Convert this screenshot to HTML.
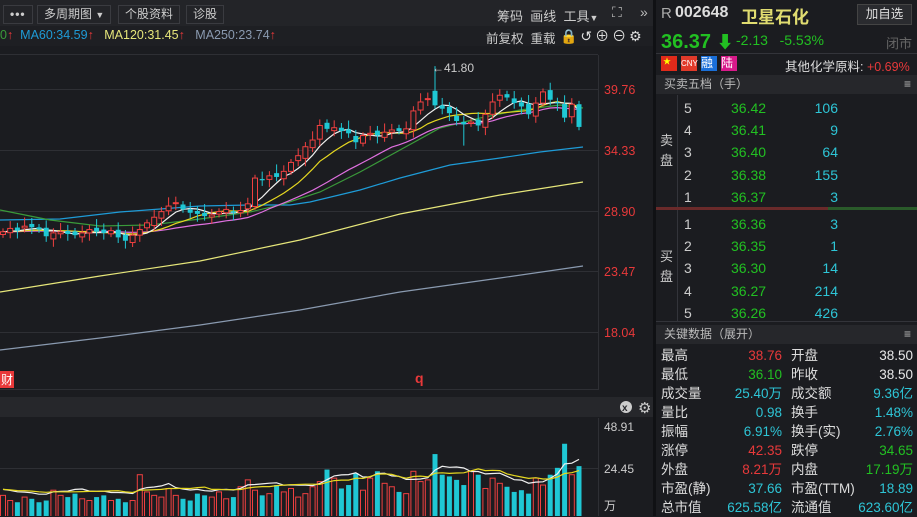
<!DOCTYPE html>
<html><head><meta charset="utf-8"><style>
*{margin:0;padding:0;box-sizing:border-box}
body{width:917px;height:516px;overflow:hidden;background:#1b1c20;font-family:"Liberation Sans","Noto Sans CJK SC",sans-serif;color:#ccc;position:relative}
.a{position:absolute;white-space:nowrap}
.btn{position:absolute;top:5px;height:19px;border:1px solid #3a3b40;background:#232428;color:#ccc;font-size:12px;line-height:17px;padding:0 6px}
.g{color:#22c022}.r{color:#e8393a}.c{color:#2ec5d6}.w{color:#e8e8e8}
.rt{text-align:right}
.hd{position:absolute;left:656px;width:261px;height:19px;background:#26272b;font-size:12px;line-height:19px;padding-left:8px;color:#bbb}
.kd{position:absolute;font-size:13.5px;line-height:19px}
</style></head><body>
<!-- top toolbar -->
<div class="a" style="left:0;top:0;width:655px;height:26px;background:#232428"></div>
<div class="btn" style="left:3px;width:30px;font-weight:bold;letter-spacing:1px">•••</div>
<div class="btn" style="left:37px">多周期图 <span style="font-size:9px">▼</span></div>
<div class="btn" style="left:118px">个股资料</div>
<div class="btn" style="left:186px">诊股</div>
<div class="a" style="left:497px;top:6px;font-size:13px;color:#ccc">筹码 &nbsp;画线 &nbsp;工具<span style="font-size:9px">▼</span></div>
<div class="a" style="left:612px;top:4px;font-size:14px;color:#bbb">⛶</div>
<div class="a" style="left:640px;top:4px;font-size:14px;color:#bbb">»</div>
<!-- MA row -->
<div class="a" style="left:0;top:26px;width:655px;height:20px;background:#1e1f23"></div>
<div class="a" style="left:0;top:28px;font-size:12.5px"><span style="color:#3a9a3a">0</span><span class="r">↑</span> &nbsp;<span style="color:#1e9bd7">MA60:34.59</span><span class="r">↑</span> &nbsp;&nbsp;<span style="color:#e6e67a">MA120:31.45</span><span class="r">↑</span> &nbsp;&nbsp;<span style="color:#8a9ab0">MA250:23.74</span><span class="r">↑</span></div>
<div class="a" style="left:486px;top:28px;font-size:12.5px;color:#ccc">前复权 &nbsp;重载</div>
<div class="a" style="left:560px;top:26px;font-size:14px;color:#ddd;letter-spacing:3px">🔒↺⊕⊖⚙</div>
<div class="a" style="left:0;top:54px;width:598px;height:1px;background:#2e2f34"></div>
<!-- main chart -->
<svg class="a" style="left:0;top:0" width="655" height="516" id="ch">
<g stroke="#2e2f34" stroke-width="1">
<line x1="0" y1="89.5" x2="598" y2="89.5"/><line x1="0" y1="150.5" x2="598" y2="150.5"/><line x1="0" y1="211.5" x2="598" y2="211.5"/><line x1="0" y1="271.5" x2="598" y2="271.5"/><line x1="0" y1="332.5" x2="598" y2="332.5"/>
<line x1="598.5" y1="55" x2="598.5" y2="390"/><line x1="0" y1="389.5" x2="598" y2="389.5"/>
<line x1="0" y1="468.5" x2="598" y2="468.5"/><line x1="598.5" y1="418" x2="598.5" y2="516"/>
</g>
<g font-size="12.5" fill="#e8393a" font-family="Liberation Sans">
<text x="604" y="94">39.76</text><text x="604" y="155">34.33</text><text x="604" y="216">28.90</text><text x="604" y="276">23.47</text><text x="604" y="337">18.04</text></g>
<g fill="none" stroke-width="1.2">
<polyline stroke="#8a9ab0" points="0,350 100,338 200,325 300,310 400,292 500,278 583,266"/>
<polyline stroke="#e6e67a" points="0,292 100,276 200,261 300,240 400,214 500,195 583,182"/>
<polyline stroke="#1e9bd7" points="0,220 60,219 120,212 200,206 250,205 290,205 310,202 360,190 400,178 450,165 500,158 540,152 583,147"/>
<polyline stroke="#3a9a3a" points="0,210 50,220 100,226 150,225 200,219 250,212 280,205 320,192 360,172 400,150 440,128 480,118 520,110 560,105 583,108"/>
</g>
<g id="cd"></g>
<text x="432" y="72" font-size="12" fill="#ccc">←41.80</text>
<rect x="0" y="371" width="14" height="17" fill="#e8393a"/>
<text x="1" y="384" font-size="12" fill="#fff">财</text>
<text x="415" y="383" font-size="14" font-weight="bold" fill="#e8393a">q</text>
<rect x="0" y="397" width="655" height="20" fill="#26272b"/>
<circle cx="626" cy="407" r="6" fill="#ccc"/><text x="622" y="411" font-size="10" fill="#26272b" font-weight="bold">x</text>
<text x="638" y="413" font-size="15" fill="#ccc">⚙</text>
<g id="vl"></g>
<g font-size="12" fill="#ccc"><text x="604" y="431">48.91</text><text x="604" y="473">24.45</text><text x="604" y="510">万</text></g>
</svg>
<!-- right panel -->
<div class="a" style="left:653px;top:0;width:3px;height:516px;background:#101114"></div>
<div class="a" style="left:661px;top:5px;font-size:15px;color:#aaa">R</div>
<div class="a" style="left:675px;top:4px;font-size:16px;font-weight:bold;color:#ddd">002648</div>
<div class="a" style="left:741px;top:3px;font-size:17px;font-weight:bold;color:#e0dc70">卫星石化</div>
<div class="a" style="left:857px;top:4px;width:55px;height:21px;background:#2a2b2f;border:1px solid #444;font-size:12.5px;line-height:19px;text-align:center;color:#ddd">加自选</div>
<div class="a g" style="left:661px;top:28px;font-size:20px;font-weight:bold">36.37 <span style="font-size:17px">⬇</span></div>
<div class="a g" style="left:736px;top:32px;font-size:14px">-2.13 &nbsp;&nbsp;-5.53%</div>
<div class="a" style="left:886px;top:33px;font-size:13px;color:#666">闭市</div>
<div class="a" style="left:656px;top:53px;width:261px;height:1px;background:#33343a"></div>
<div class="a" style="left:661px;top:56px;width:16px;height:15px;background:#e02a1a;color:#ff0;font-size:8px;padding-left:2px">★</div>
<div class="a" style="left:681px;top:56px;width:16px;height:15px;background:#e03a2a;color:#fff;font-size:8px;line-height:15px">CNY</div>
<div class="a" style="left:701px;top:56px;width:16px;height:15px;background:#1a6fd8;color:#fff;font-size:12px;line-height:15px">融</div>
<div class="a" style="left:721px;top:56px;width:16px;height:15px;background:#d81a8a;color:#fff;font-size:12px;line-height:15px">陆</div>
<div class="a" style="left:785px;top:56px;font-size:12.5px;color:#ddd">其他化学原料: <span class="r">+0.69%</span></div>
<div class="hd" style="top:75px">买卖五档（手）<span style="position:absolute;right:6px">≡</span></div>
<div class="a" style="left:677px;top:95px;width:1px;height:227px;background:#33343a"></div>
<div class="a" style="left:656px;top:321px;width:261px;height:1px;background:#33343a"></div>
<div class="a" style="left:660px;top:131px;font-size:13px;line-height:20px;color:#ccc">卖<br>盘</div>
<div class="a" style="left:660px;top:247px;font-size:13px;line-height:20px;color:#ccc">买<br>盘</div>
<div class="a" style="left:656px;top:207px;width:172px;height:3px;background:#6a2a2a"></div>
<div class="a" style="left:828px;top:207px;width:89px;height:3px;background:#2a5a2a"></div>
<div class="a" style="left:684px;top:97px;font-size:14px;line-height:22.2px;color:#ccc">5<br>4<br>3<br>2<br>1</div>
<div class="a g" style="left:731px;top:97px;font-size:14px;line-height:22.2px">36.42<br>36.41<br>36.40<br>36.38<br>36.37</div>
<div class="a c rt" style="left:780px;width:58px;top:97px;font-size:14px;line-height:22.2px">106<br>9<br>64<br>155<br>3</div>
<div class="a" style="left:684px;top:213px;font-size:14px;line-height:22.2px;color:#ccc">1<br>2<br>3<br>4<br>5</div>
<div class="a g" style="left:731px;top:213px;font-size:14px;line-height:22.2px">36.36<br>36.35<br>36.30<br>36.27<br>36.26</div>
<div class="a c rt" style="left:780px;width:58px;top:213px;font-size:14px;line-height:22.2px">3<br>1<br>14<br>214<br>426</div>
<div class="hd" style="top:325px">关键数据（展开）<span style="position:absolute;right:6px">≡</span></div>
<div class="kd" style="left:661px;top:346px;color:#ddd">最高<br>最低<br>成交量<br>量比<br>振幅<br>涨停<br>外盘<br>市盈(静)<br>总市值</div>
<div class="kd rt" style="left:700px;width:82px;top:346px"><span class="r">38.76</span><br><span class="g">36.10</span><br><span class="c">25.40万</span><br><span class="c">0.98</span><br><span class="c">6.91%</span><br><span class="r">42.35</span><br><span class="r">8.21万</span><br><span class="c">37.66</span><br><span class="c">625.58亿</span></div>
<div class="kd" style="left:791px;top:346px;color:#ddd">开盘<br>昨收<br>成交额<br>换手<br>换手(实)<br>跌停<br>内盘<br>市盈(TTM)<br>流通值</div>
<div class="kd rt" style="left:830px;width:83px;top:346px"><span class="w">38.50</span><br><span class="w">38.50</span><br><span class="c">9.36亿</span><br><span class="c">1.48%</span><br><span class="c">2.76%</span><br><span class="g">34.65</span><br><span class="g">17.19万</span><br><span class="c">18.89</span><br><span class="c">623.60亿</span></div>
<script>
var C=[27.0,27.3,27.1,27.5,27.4,27.2,26.6,26.9,27.0,26.8,26.7,26.9,27.2,27.0,26.9,27.1,26.5,26.2,26.7,27.2,27.8,28.3,28.8,29.3,29.6,29.0,28.7,28.6,28.4,28.5,28.8,29.0,28.7,28.9,29.5,31.8,31.6,32.0,31.9,32.4,33.2,33.8,34.6,35.2,36.5,36.2,36.3,36.0,35.8,35.0,35.6,35.8,35.6,35.9,36.1,36.0,36.2,37.8,38.6,38.9,38.3,38.0,37.6,36.9,36.6,36.8,36.5,37.5,38.6,39.2,39.0,38.5,38.2,37.5,38.5,39.5,38.8,38.5,37.2,38.4,36.37];
var V=[12,9,8,11,10,8,9,15,12,11,13,10,9,11,12,9,10,8,9,24,14,12,11,16,12,10,9,13,12,11,14,10,11,17,21,15,12,13,18,14,16,11,13,17,20,27,22,16,18,25,15,22,26,19,17,14,13,26,20,21,36,24,23,21,18,26,24,16,22,19,17,14,15,13,22,18,24,28,42,24,29];
function y(p){return 89+(39.76-p)*11.19}
var ns="http://www.w3.org/2000/svg",cd=document.getElementById('cd'),vl=document.getElementById('vl');
function el(g,t,a){var e=document.createElementNS(ns,t);for(var k in a)e.setAttribute(k,a[k]);g.appendChild(e);return e}
function ma(arr,n){var r=[];for(var i=0;i<arr.length;i++){var s=0;for(var j=i-n+1;j<=i;j++)s+=arr[Math.max(0,j)];r.push(s/n)}return r}
function line(g,arr,f,col){var p=[];for(var i=0;i<arr.length;i++)p.push((3+i*7.2).toFixed(1)+','+f(arr[i]).toFixed(1));el(g,'polyline',{points:p.join(' '),fill:'none',stroke:col,'stroke-width':1.2})}
line(cd,ma(C,20),y,'#e070e0');line(cd,ma(C,10),y,'#e6d820');line(cd,ma(C,5),y,'#f0f0f0');
for(var i=0;i<C.length;i++){var x=3+i*7.2,c=C[i],pc=i?C[i-1]:c;var o=pc+((i*37)%7-3)*0.08;if(c<pc&&o<c)o=c+0.3;if(c>pc&&o>c)o=c-0.3;if(i==60)o=39.6;if(i==80)o=38.4;
var h=Math.max(o,c)+0.3+((i*13)%5)*0.12,l=Math.min(o,c)-0.3-((i*7)%5)*0.1;if(i==60)h=41.8;if(i==64)l=34.7;
var up=c>=o,col=up?'#f04040':'#1fc7d4';el(cd,'line',{x1:x,x2:x,y1:y(h),y2:y(l),stroke:col});
var t=y(Math.max(o,c)),b=y(Math.min(o,c));if(b-t<1)b=t+1;
el(cd,'rect',up?{x:x-2.5,y:t,width:5,height:b-t,fill:'#1b1c20',stroke:col}:{x:x-2.5,y:t,width:5,height:b-t,fill:col});
var vh=V[i]*1.72,vup=up;el(vl,'rect',vup?{x:x-2.5,y:516-vh,width:5,height:vh+2,fill:'none',stroke:'#f04040'}:{x:x-2.5,y:516-vh,width:5,height:vh,fill:'#1fc7d4'});}
function vy(v){return 510-v*1.72}
line(vl,ma(V,5),vy,'#f0f0f0');line(vl,ma(V,10),vy,'#e6d820');
</script>
</body></html>
